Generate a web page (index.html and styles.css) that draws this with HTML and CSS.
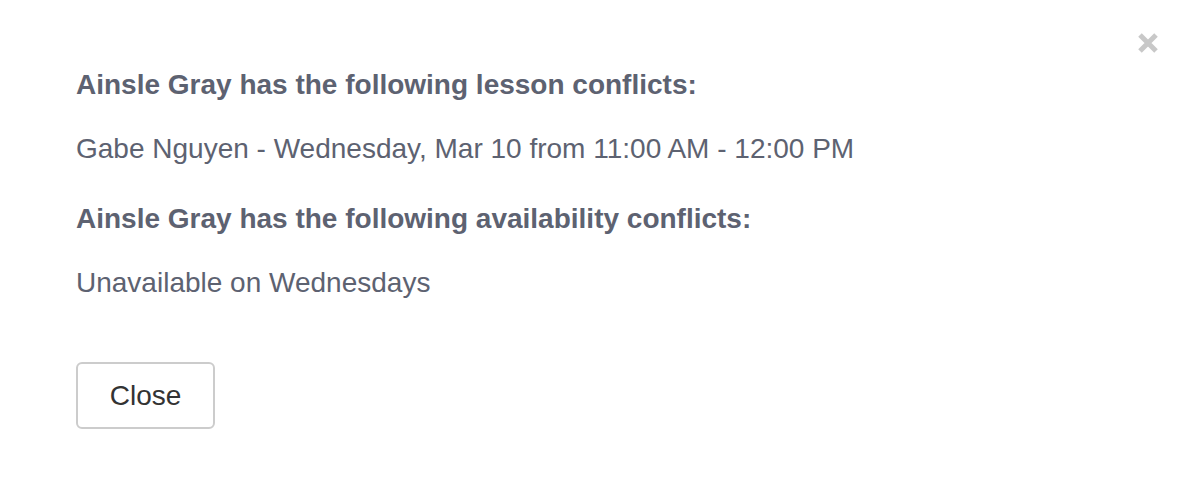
FILE: index.html
```html
<!DOCTYPE html>
<html>
<head>
<meta charset="utf-8">
<link rel="stylesheet" href="styles.css">
</head>
<body>
<div class="modal">
  <button class="close-x" aria-label="Close">
    <svg width="22" height="22" viewBox="0 0 22 22"><path d="M3 3 L19 19 M19 3 L3 19" stroke="#c8c8c8" stroke-width="5" stroke-linecap="butt"/></svg>
  </button>
  <div class="content">
    <h3 class="title">Ainsle Gray has the following lesson conflicts:</h3>
    <p class="line">Gabe Nguyen - Wednesday, Mar 10 from 11:00 AM - 12:00 PM</p>
    <h3 class="title">Ainsle Gray has the following availability conflicts:</h3>
    <p class="line">Unavailable on Wednesdays</p>
  </div>
  <div class="footer">
    <button class="btn">Close</button>
  </div>
</div>
</body>
</html>
```
FILE: styles.css
```css
html, body {
  margin: 0;
  padding: 0;
  background: #fff;
}
body {
  font-family: "Liberation Sans", Arial, Helvetica, sans-serif;
  width: 1188px;
  height: 478px;
  overflow: hidden;
}
.modal {
  position: relative;
  padding: 68px 76px 0 76px;
}
.close-x {
  position: absolute;
  top: 32px;
  right: 29px;
  background: none;
  border: 0;
  padding: 0;
  width: 22px;
  height: 22px;
}
.close-x svg { display: block; }
.content {
  display: flex;
  flex-direction: column;
}
.title {
  margin: 0;
  font-size: 28px;
  line-height: 34px;
  font-weight: bold;
  color: #5d6271;
}
.line {
  margin: 30px 0 36px 0;
  font-size: 28px;
  line-height: 34px;
  color: #5d6271;
}
.footer {
  padding-top: 26px;
}
.btn {
  display: block;
  width: 139px;
  height: 67px;
  border: 2px solid #cccccc;
  border-radius: 6px;
  background: #fff;
  font-family: "Liberation Sans", Arial, Helvetica, sans-serif;
  font-size: 28px;
  color: #333;
  padding: 0;
}
```
